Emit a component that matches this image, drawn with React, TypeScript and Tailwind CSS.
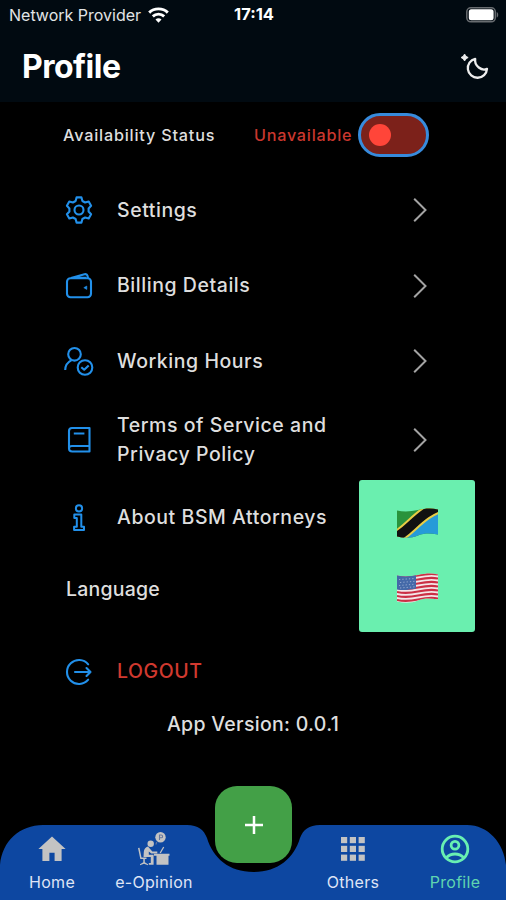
import type { ReactNode } from 'react'

interface RowProps {
  icon: ReactNode
  label: ReactNode
  height: string
  chevron?: boolean
  danger?: boolean
}

function StatusBar() {
  return (
    <div className="grid h-7 grid-cols-3 items-center pl-[9px] pr-[7px] pt-px">
      <div className="flex items-center gap-[7px] whitespace-nowrap text-[16px] text-[#e2e4e6]">
        <span>Network Provider</span>
        <svg width="21" height="16" viewBox="0 0 21 16" fill="none" stroke="#fff" strokeWidth="2.9">
          <path d="M1.2 5.6C6.2.6 14.8.6 19.8 5.6" />
          <path d="M4.8 9.4c3.2-3 8.2-3 11.4 0" />
          <path d="M10.5 15.7l-3-3.3c1.7-1.5 4.3-1.5 6 0z" fill="#fff" stroke="none" />
        </svg>
      </div>
      <span className="text-center text-[16.5px] font-bold text-white">17:14</span>
      <svg className="justify-self-end" width="33" height="16" viewBox="0 0 33 16">
        <rect x=".8" y=".8" width="28.5" height="14" rx="4" fill="none" stroke="#686c70" strokeWidth="1.5" />
        <rect x="2.8" y="2.3" width="24.8" height="11" rx="2.5" fill="#fff" />
        <path d="M30.7 5c2 .8 2 4.8 0 5.6z" fill="#686c70" />
      </svg>
    </div>
  )
}

function Header() {
  return (
    <header className="h-[102px] bg-[#010a11]">
      <StatusBar />
      <div className="flex h-[74px] items-center justify-between pl-[22px] pr-[17px] pt-[3px]">
        <h1 className="text-[32px] font-bold leading-none tracking-[-0.5px] text-white">Profile</h1>
        <svg width="28" height="26" viewBox="0 0 28 26" fill="none">
          <path d="M14.2 4.8A9.6 9.6 0 1 0 26 14.8C21 17.500 13 12 14.2 4.8Z" stroke="#ededed" strokeWidth="2.3" strokeLinejoin="round" />
          <path d="M3.6 0L5 2.2 7.2 3.5 5 4.9 3.6 7 2.2 4.9 0 3.5 2.2 2.2Z" fill="#ededed" stroke="#ededed" strokeWidth=".8" />
        </svg>
      </div>
    </header>
  )
}

function Chevron() {
  return (
    <svg className="ml-auto shrink-0" width="14" height="24" viewBox="0 0 14 24" fill="none" stroke="#a3a3a3" strokeWidth="2">
      <path d="M1.2.8L12.5 12 1.2 23.2" />
    </svg>
  )
}

function Row({ icon, label, height, chevron, danger }: RowProps) {
  return (
    <div className={`flex items-center pl-[64px] pr-[79px] ${height}`}>
      <div className="mr-[23px] w-[30px] shrink-0 text-[#2290ea]">{icon}</div>
      <div className={`whitespace-nowrap text-[19.5px] font-medium leading-[29px] tracking-[0.55px] ${danger ? 'text-[#d0392f]' : 'text-[#dedede]'}`}>{label}</div>
      {chevron && <Chevron />}
    </div>
  )
}

const iconProps = {
  width: 30,
  height: 30,
  viewBox: '0 0 30 30',
  fill: 'none',
  stroke: 'currentColor',
  strokeWidth: 2.1,
  strokeLinejoin: 'round' as const,
}

const GearIcon = () => (
  <svg {...iconProps}>
    <path d="M12.6 2.4h4.8l1 3.6 2.7 1.5 3.6-.9 2.4 4.2-2.5 2.7v3l2.5 2.7-2.4 4.2-3.6-.9-2.7 1.5-1 3.600h-4.800l-1-3.600-2.700-1.500-3.600.9-2.400-4.200 2.500-2.700v-3l-2.500-2.700 2.400-4.200 3.600.9 2.700-1.500z" />
    <circle cx="15" cy="15" r="4.5" />
  </svg>
)

const WalletIcon = () => (
  <svg {...iconProps}>
    <rect x="3" y="7.2" width="24" height="19" rx="3.5" />
    <path d="M7 7l13.5-3.8c1.7-.4 2.7.4 3 1.6l.5 2.4M8 6.8h14" />
    <path d="M22.8 15v3.4l-3-1.7z" fill="currentColor" strokeWidth=".6" />
  </svg>
)

const UserClockIcon = () => (
  <svg {...iconProps}>
    <circle cx="10.5" cy="8.3" r="6.3" />
    <path d="M1.2 24c0-4.8 2.5-7.9 6.4-9.9" />
    <circle cx="21" cy="21.5" r="7.3" />
    <path d="M17.3 21.2l2.9 2.5 4.5-4.2" />
  </svg>
)

const BookIcon = () => (
  <svg {...iconProps}>
    <path d="M25.5 21V3H8C6 3 5 4 5 6v17.500C5 25.700 6.200 26.500 8.200 26.500H25.500V21H8c-2 0-3 .9-3 2.500M9.800 8.500h10.600" />
  </svg>
)

const InfoIcon = () => (
  <svg {...iconProps} strokeWidth={2}>
    <circle cx="15" cy="5.4" r="3.1" />
    <path d="M10.3 11.5h7v12.2H20v3.2h-9.900v-3.200h2.700v-8.800h-2.500z" />
  </svg>
)

const LogoutIcon = () => (
  <svg {...iconProps} strokeLinecap="round">
    <path d="M24.2 7.3a12 12 0 1 0 0 15.4" />
    <path d="M11 15h15.5M22.5 11l4 4-4 4" />
  </svg>
)

function Availability() {
  return (
    <div className="flex h-[66px] items-center pl-[63px]">
      <span className="w-[191px] whitespace-nowrap pt-px text-[16.2px] font-medium tracking-[0.8px] text-[#dedede]">Availability Status</span>
      <span className="w-[104px] whitespace-nowrap pt-px text-[16.2px] font-medium tracking-[0.75px] text-[#c9372e]">Unavailable</span>
      <div className="flex h-[44px] w-[71px] items-center rounded-full border-[3px] border-[#378bdc] bg-[#7c211a] pl-[8px]">
        <div className="size-[22px] rounded-full bg-[#ff4539]" />
      </div>
    </div>
  )
}

// both flags wave along the same outline
const flagShape = 'M0 3.5C7 5 14 4.5 21 3S34 1 41 2.5V27.5C33 26 27 26 21 28.5S8 31.5 0 29.5Z'

function TanzaniaFlag() {
  return (
    <svg width="41" height="33" viewBox="0 0 41 33">
      <defs>
        <clipPath id="tz"><path d={flagShape} /></clipPath>
      </defs>
      <g clipPath="url(#tz)">
        <path d="M0 0H41V33H0Z" fill="#29933c" />
        <path d="M41 0V33H0Z" fill="#269bd8" />
        <path d="M-6 33C12 26 22 4 47-2" fill="none" stroke="#e8cc45" strokeWidth="13.5" />
        <path d="M-6 33C12 26 22 4 47-2" fill="none" stroke="#111" strokeWidth="9.5" />
      </g>
    </svg>
  )
}

function UsaFlag() {
  return (
    <svg width="41" height="33" viewBox="0 0 41 33">
      <defs>
        <clipPath id="us"><path d={flagShape} /></clipPath>
      </defs>
      <g clipPath="url(#us)">
        <path d="M0 0H41V33H0Z" fill="#f3e6e8" />
        {[0.5, 4.5, 8.5, 12.5, 16.5, 20.5, 24.5, 28.5].map((y) => (
          <path key={y} d="M0 3.5C7 5 14 4.500 21 3S34 .5 41 2" transform={`translate(0 ${y})`} fill="none" stroke="#cb2f45" strokeWidth="2.1" />
        ))}
        <path d="M0 0H19V16.5C12 18 6 18.5 0 17.5Z" fill="#4469a8" />
        <path d="M2 7.5L18 6.5M3 10.5L18 9.3M2 13.5L18 12.2M3 16L18 14.8" stroke="#93a9cf" strokeWidth="1" strokeDasharray="1.3 2" />
      </g>
    </svg>
  )
}

function LanguageMenu() {
  return (
    <div className="absolute right-[31px] top-[-75px] flex h-[152px] w-[116px] flex-col items-center gap-[32px] rounded-[3px] bg-[#6aefaf] pt-[27px]">
      <TanzaniaFlag />
      <UsaFlag />
    </div>
  )
}

const HomeIcon = () => (
  <svg width="28" height="26" viewBox="0 0 28 26" fill="#c3c3c3">
    <path d="M14 .5L.4 13H4.400v12h7v-8.300h5.200V25h7V13h4z" />
  </svg>
)

const DeskIcon = () => (
  <svg width="32" height="34" viewBox="0 0 32 34" fill="#c3c3c3">
    <circle cx="22.5" cy="5.2" r="5.2" />
    <path d="M21.5 8V3h1.7a1.4 1.4 0 0 1 0 2.8h-1.5M18.8 10l-1 2.5" fill="none" stroke="#64779f" strokeWidth="1.1" />
    <circle cx="12.7" cy="11.8" r="3.2" />
    <path d="M10 14.5c-2.600.5-4 2.800-4.200 5.500l-.3 5h7.300v6h-2v1.700h4.800v-10h-4.800v-3.200l2.500 2h6v-1.900h-5z" />
    <path d="M0 16l1.500-.3 2 9.700h5v1.500H6.800v3.300l3.200 2v1l-4-1.500-4 1.500v-1l3.300-2v-3.300H2.300z" />
    <path d="M16 21.8h15.500v2H30.500v9H18.500v-9H16z" />
    <path d="M22.2 21l3.5-6" stroke="#c3c3c3" strokeWidth="1.3" />
  </svg>
)

const GridIcon = () => (
  <svg width="24" height="24" viewBox="0 0 24 24" fill="#c3c3c3">
    {[0, 8.8, 17.6].map((y) => [0, 8.8, 17.6].map((x) => (
      <rect key={`${x}-${y}`} x={x} y={y} width="6.2" height="6.2" />
    )))}
  </svg>
)

const ProfileIcon = () => (
  <svg width="30" height="30" viewBox="0 0 30 30" fill="none" stroke="#68efb2" strokeWidth="2.8">
    <circle cx="15" cy="15" r="12.8" />
    <circle cx="15" cy="11.3" r="3.9" />
    <path d="M6.5 23.5c4.500-4.700 12.500-4.700 17 0" />
  </svg>
)

function NavItem({ icon, label, active }: { icon: ReactNode; label: string; active?: boolean }) {
  return (
    <div className="flex w-[102px] flex-col items-center">
      <div className="flex h-[46px] items-center justify-center pt-px">{icon}</div>
      <span className={`text-[16px] leading-[22px] tracking-[0.3px] ${active ? 'text-[#5fd5b0]' : 'text-[#dfe4f5]'}`}>{label}</span>
    </div>
  )
}

function BottomNav() {
  return (
    <nav className="relative h-[75px]">
      <svg className="absolute inset-0" width="506" height="75" viewBox="0 0 506 75">
        <path d="M0 75V40C2 16 20 0 43 0H187C198 0 204 5 207 13C213 33 229 47 253.5 47S294 33 300 13C303 5 309 0 320 0H467C488 0 504 18 506 40V75Z" fill="#0d47a1" />
      </svg>
      <div className="relative flex justify-between pl-px">
        <div className="flex">
          <NavItem icon={<HomeIcon />} label="Home" />
          <NavItem icon={<DeskIcon />} label="e-Opinion" />
        </div>
        <div className="flex">
          <NavItem icon={<GridIcon />} label="Others" />
          <NavItem icon={<ProfileIcon />} label="Profile" active />
        </div>
      </div>
      <button className="absolute left-[215px] top-[-39px] flex h-[77px] w-[77px] items-center justify-center rounded-[22px] bg-[#43a047]">
        <svg width="20" height="20" viewBox="0 0 20 20" stroke="#fff" strokeWidth="2.5">
          <path d="M10 1v18M1 10h18" />
        </svg>
      </button>
    </nav>
  )
}

export default function App() {
  return (
    <div className="flex h-[900px] w-[506px] flex-col overflow-hidden bg-black font-['Inter',sans-serif]">
      <Header />
      <main className="flex-1">
        <Availability />
        <div className="pt-1">
          <Row icon={<GearIcon />} label="Settings" height="h-[76px]" chevron />
          <Row icon={<WalletIcon />} label="Billing Details" height="h-[75px]" chevron />
          <Row icon={<UserClockIcon />} label="Working Hours" height="h-[76px]" chevron />
          <Row icon={<BookIcon />} label={<>Terms of Service and<br />Privacy Policy</>} height="h-[81px]" chevron />
          <Row icon={<InfoIcon />} label="About BSM Attorneys" height="h-[75px]" />
        </div>
        <div className="relative flex h-[68px] items-center pl-[66px]">
          <span className="pt-px text-[19.5px] font-medium tracking-[0.2px] text-[#dedede]">Language</span>
          <LanguageMenu />
        </div>
        <div className="pt-[11px]">
          <Row icon={<LogoutIcon />} label="LOGOUT" height="h-[75px]" danger />
        </div>
        <p className="text-center text-[19.5px] font-medium leading-[30px] tracking-[0.3px] text-[#dedede]">App Version: 0.0.1</p>
      </main>
      <BottomNav />
    </div>
  )
}
